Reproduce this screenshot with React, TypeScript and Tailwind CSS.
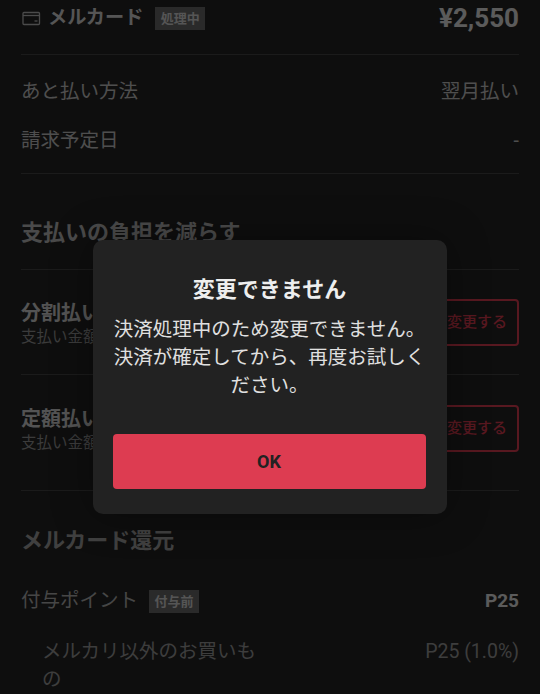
const FONT = "font-['Roboto','Noto_Sans_CJK_JP',sans-serif]";

function CardIcon() {
  return (
    <svg width="19" height="15" viewBox="0 0 19 15" fill="none" className="shrink-0 text-[#bcbcbc]">
      <rect x="1" y="1.5" width="16.5" height="12" rx="1" stroke="currentColor" strokeWidth="1.3" />
      <path d="M1 4.5h16.5" stroke="currentColor" strokeWidth="1.3" />
      <path d="M12.5 10h3" stroke="currentColor" strokeWidth="1.3" />
    </svg>
  );
}

function Tag({ children }: { children: string }) {
  return (
    <span className="flex h-[23px] w-[50px] items-center justify-center bg-[#6a6a6a] text-[13px] font-bold leading-none text-[#d4d4d4]">
      {children}
    </span>
  );
}

function InfoRow({ label, value }: { label: string; value: string }) {
  return (
    <div className="flex h-[49px] items-center justify-between">
      <span className="text-[19.5px] text-[#c4c4c4]">{label}</span>
      <span className="text-[19.5px] text-[#c4c4c4]">{value}</span>
    </div>
  );
}

function PlanRow({ title, note }: { title: string; note: string }) {
  return (
    <div className="flex items-center justify-between border-b border-[#444]">
      <div className="pt-[3px]">
        <div className="text-[20px] font-bold leading-[26px] text-[#d0d0d0]">{title}</div>
        <div className="text-[15.5px] leading-[22px] text-[#949494]">{note}</div>
      </div>
      <button className="flex h-[47px] w-[98px] items-center justify-end rounded-[4px] border-2 border-[#dd3c51] pr-[10px] text-[15px] font-medium text-[#dd3c51]">
        変更する
      </button>
    </div>
  );
}

export default function App() {
  return (
    <div className={`relative h-[694px] w-[540px] overflow-hidden bg-[#242424] ${FONT}`}>
      <main className="px-[21px]">
        <div className="flex h-[55px] items-start justify-between border-b border-[#444] pt-[1px]">
          <div className="flex h-[35px] items-center pl-px">
            <CardIcon />
            <span className="ml-[7px] mr-[12px] text-[19.2px] font-bold text-[#d4d4d4]">メルカード</span>
            <Tag>処理中</Tag>
          </div>
          <span className="text-[26px] font-bold leading-[35px] text-[#e4e4e4]">¥2,550</span>
        </div>

        <div className="border-b border-[#444] pb-[8px] pt-[12px]">
          <InfoRow label="あと払い方法" value="翌月払い" />
          <InfoRow label="請求予定日" value="-" />
        </div>

        <h2 className="flex h-[96px] items-end border-b border-[#444] pb-[20px] text-[22px] font-bold leading-[32px] text-[#b8b8b8]">
          支払いの負担を減らす
        </h2>

        <div className="[&>div]:h-[105px]">
          <PlanRow title="分割払い" note="支払い金額" />
        </div>
        <div className="[&>div]:h-[116px] [&>div]:pb-[9px]">
          <PlanRow title="定額払い" note="支払い金額" />
        </div>

        <h2 className="mt-[34px] text-[22px] font-bold leading-[32px] text-[#a0a0a0]">メルカード還元</h2>

        <div className="mt-[28px] flex h-[32px] items-center justify-between">
          <div className="flex items-center gap-[11px]">
            <span className="text-[19.5px] text-[#b0b0b0]">付与ポイント</span>
            <Tag>付与前</Tag>
          </div>
          <span className="text-[19px] font-bold text-[#e4e4e4]">P25</span>
        </div>

        <div className="mt-[21px] flex items-start justify-between pl-[21px]">
          <span className="w-[222px] text-[19.5px] leading-[28px] text-[#989898]">メルカリ以外のお買いもの</span>
          <span className="text-[19.5px] leading-[28px] text-[#989898]">P25 (1.0%)</span>
        </div>
      </main>

      <div className="absolute inset-0 flex items-start justify-center bg-black/60 pr-[1px] pt-[240px]">
        <div className="flex h-[274px] w-[354px] flex-col rounded-[10px] bg-[#222] px-[20px] shadow-[0_0_40px_rgba(0,0,0,0.35)]">
          <h1 className="mt-[34px] text-center text-[22px] font-bold leading-[32px] text-[#eee]">変更できません</h1>
          <p className="mx-auto mt-[10px] w-[314px] text-center text-[19.5px] leading-[28px] text-[#e0e0e0]">
            決済処理中のため変更できません。決済が確定してから、再度お試しください。
          </p>
          <button className="mt-[34px] h-[55px] w-[313px] rounded-[4px] bg-[#dd3c51] text-[18px] font-bold text-[#222]">
            OK
          </button>
        </div>
      </div>
    </div>
  );
}
